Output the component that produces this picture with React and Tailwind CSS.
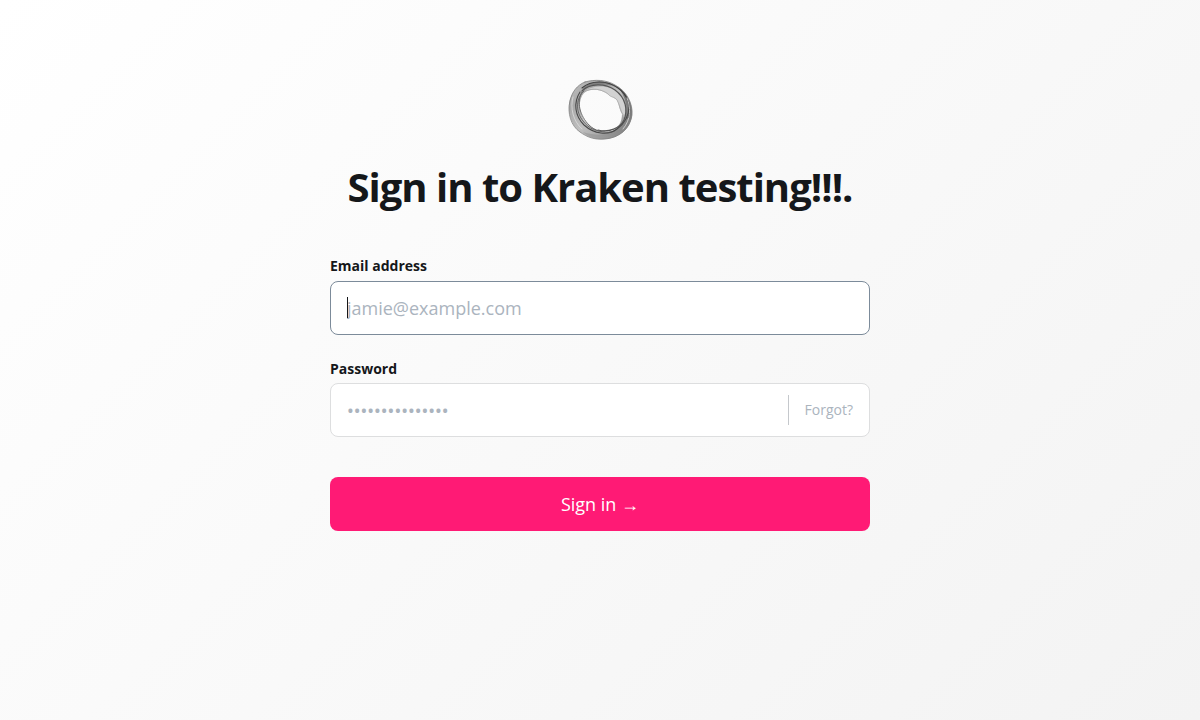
function Logo() {
  return (
    <svg viewBox="0 0 80 80" className="h-20 w-20" aria-hidden="true">
      <defs>
        <linearGradient id="ring" x1="0" y1="0" x2="1" y2="1">
          <stop offset="0" stopColor="#c6c6c6" />
          <stop offset=".25" stopColor="#a8a8a8" />
          <stop offset=".5" stopColor="#c0c0c0" />
          <stop offset="1" stopColor="#858585" />
        </linearGradient>
        <linearGradient id="shade" x1="0" y1="1" x2="1" y2="0">
          <stop offset="0" stopColor="#a5a5a5" />
          <stop offset=".5" stopColor="#858585" />
          <stop offset="1" stopColor="#636363" />
        </linearGradient>
      </defs>
      <path fillRule="evenodd" fill="url(#ring)" d="M25 12C34 9 46 10 55 15C66 21 73 33 72 45C71 58 60 68 45 69C34 70 28 67 20 62C12 56 8 45 9 33C11 23 17 15 25 12ZM24 23C18 30 19 42 24 50C30 58 40 63 49 62C58 60 62 52 62 44C59 39 59 34 57 30C53 27 52 27 48 24C40 19 30 18 24 23Z" />
      <path fill="#d2d2d2" d="M25 21C34 14 51 15 60 24C66 31 67 39 64 47C60 41 60 35 57 30C53 27 51 27 47 23C40 19 31 18 25 21Z" />
      <path fill="url(#shade)" opacity=".85" d="M58 17C68 24 73 35 72 45C70 60 57 69 43 69C34 69 27 66 23 62C36 66 48 66 56 59C68 51 71 34 58 17Z" />
      <path fill="#777" opacity=".8" d="M22 20C29 10 47 8 60 19C49 13 33 13 22 20Z" />
      <g fill="none" strokeLinecap="round">
        <path strokeWidth=".8" stroke="#808080" d="M25 12C35 9 47 10 55 15C67 21 73 34 72 45C70 59 59 68 45 69C34 70 27 67 20 62C11 56 7 43 10 31C12 22 17 15 25 12Z" />
        <path strokeWidth="1.1" stroke="#3c3c3c" d="M22 18C31 10 47 10 58 18C68 25 72 37 68 48" />
        <path strokeWidth="1.1" stroke="#484848" d="M20 22C13 33 15 46 24 55C34 64 48 66 57 59C65 53 69 45 69 37" />
        <path strokeWidth="1.2" stroke="#555" d="M22 21C30 13 45 13 55 20C66 28 68 40 64 50C60 58 49 63 38 60" />
        <path strokeWidth=".9" stroke="#606060" d="M24 21C16 28 15 41 23 51C29 59 37 62 45 61M22 22C16 32 20 46 29 55C35 61 43 63 51 62" />
        <path strokeWidth=".8" stroke="#aaa" d="M24 22C31 17 42 19 48 24C51 28 54 26 57 30C60 35 60 41 64 46" />
        <path strokeWidth=".8" stroke="#ddd" d="M13 27C10 38 13 51 22 59M67 28C71 37 71 50 63 59" />
      </g>
    </svg>
  );
}

export default function App() {
  return (
    <div className="min-h-screen bg-linear-[135deg,#ffffff,#f3f3f3] font-['Open_Sans',sans-serif] text-[#15171a]">
      <main className="flex flex-col items-center px-6 pt-[70px] pb-12">
        <Logo />
        <h1 className="mt-2 text-center text-[40px] leading-[58px] font-bold tracking-tight">Sign in to Kraken testing!!!.</h1>
        <form className="mt-10 w-full max-w-[540px]" onSubmit={(e) => e.preventDefault()}>
          <label htmlFor="email" className="block text-sm leading-5 font-bold">Email address</label>
          <div className="relative mt-[5px]">
            <input id="email" type="email" placeholder="jamie@example.com" className="block h-[54px] w-full rounded-lg border border-[#7c8b9a] bg-white px-4 text-lg outline-none placeholder:text-[#abb4be]" />
            <span className="absolute top-4 left-[17px] h-[21px] w-px bg-[#15171a]" />
          </div>
          <label htmlFor="password" className="mt-6 block text-sm leading-5 font-bold">Password</label>
          <div className="mt-1 flex h-[54px] items-center rounded-lg border border-[#dddedf] bg-white">
            <input id="password" type="password" placeholder="•••••••••••••••" className="h-full min-w-0 flex-1 rounded-lg px-4 font-['Noto_Sans',sans-serif] text-lg outline-none placeholder:text-[#abb4be]" />
            <button type="button" className="h-[30px] border-l border-[#c5c8cc] px-4 text-sm text-[#abb4be]">Forgot?</button>
          </div>
          <button type="submit" className="mt-10 h-[54px] w-full rounded-lg bg-[#ff1a75] text-lg text-white">Sign in →</button>
        </form>
      </main>
    </div>
  );
}
